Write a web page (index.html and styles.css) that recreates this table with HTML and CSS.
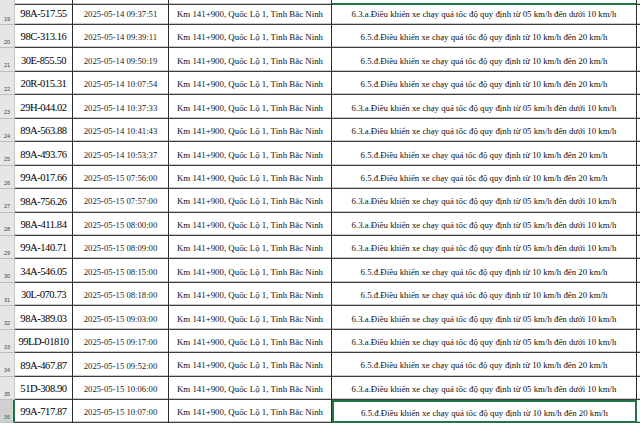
FILE: index.html
```html
<!DOCTYPE html>
<html lang="vi">
<head>
<meta charset="utf-8">
<title>Sheet</title>
<link rel="stylesheet" href="styles.css">
</head>
<body>
<div class="sheet">
  <div class="row top">
    <div class="hdr"></div><div class="c plate"></div><div class="c dt"></div><div class="c loc"></div><div class="c vio sel-top"></div><div class="c rest"></div>
  </div>
  <div class="row"><div class="hdr">19</div><div class="c plate">98A-517.55</div><div class="c dt">2025-05-14 09:37:51</div><div class="c loc">Km 141+900, Quốc Lộ 1, Tỉnh Bắc Ninh</div><div class="c vio">6.3.a.Điều khiển xe chạy quá tốc độ quy định từ 05 km/h đến dưới 10 km/h</div><div class="c rest"></div></div>
  <div class="row"><div class="hdr">20</div><div class="c plate">98C-313.16</div><div class="c dt">2025-05-14 09:39:11</div><div class="c loc">Km 141+900, Quốc Lộ 1, Tỉnh Bắc Ninh</div><div class="c vio">6.5.đ.Điều khiển xe chạy quá tốc độ quy định từ 10 km/h đến 20 km/h</div><div class="c rest"></div></div>
  <div class="row"><div class="hdr">21</div><div class="c plate">30E-855.50</div><div class="c dt">2025-05-14 09:50:19</div><div class="c loc">Km 141+900, Quốc Lộ 1, Tỉnh Bắc Ninh</div><div class="c vio">6.5.đ.Điều khiển xe chạy quá tốc độ quy định từ 10 km/h đến 20 km/h</div><div class="c rest"></div></div>
  <div class="row"><div class="hdr">22</div><div class="c plate">20R-015.31</div><div class="c dt">2025-05-14 10:07:54</div><div class="c loc">Km 141+900, Quốc Lộ 1, Tỉnh Bắc Ninh</div><div class="c vio">6.5.đ.Điều khiển xe chạy quá tốc độ quy định từ 10 km/h đến 20 km/h</div><div class="c rest"></div></div>
  <div class="row"><div class="hdr">23</div><div class="c plate">29H-044.02</div><div class="c dt">2025-05-14 10:37:33</div><div class="c loc">Km 141+900, Quốc Lộ 1, Tỉnh Bắc Ninh</div><div class="c vio">6.3.a.Điều khiển xe chạy quá tốc độ quy định từ 05 km/h đến dưới 10 km/h</div><div class="c rest"></div></div>
  <div class="row"><div class="hdr">24</div><div class="c plate">89A-563.88</div><div class="c dt">2025-05-14 10:41:43</div><div class="c loc">Km 141+900, Quốc Lộ 1, Tỉnh Bắc Ninh</div><div class="c vio">6.3.a.Điều khiển xe chạy quá tốc độ quy định từ 05 km/h đến dưới 10 km/h</div><div class="c rest"></div></div>
  <div class="row"><div class="hdr">25</div><div class="c plate">89A-493.76</div><div class="c dt">2025-05-14 10:53:37</div><div class="c loc">Km 141+900, Quốc Lộ 1, Tỉnh Bắc Ninh</div><div class="c vio">6.5.đ.Điều khiển xe chạy quá tốc độ quy định từ 10 km/h đến 20 km/h</div><div class="c rest"></div></div>
  <div class="row"><div class="hdr">26</div><div class="c plate">99A-017.66</div><div class="c dt">2025-05-15 07:56:00</div><div class="c loc">Km 141+900, Quốc Lộ 1, Tỉnh Bắc Ninh</div><div class="c vio">6.5.đ.Điều khiển xe chạy quá tốc độ quy định từ 10 km/h đến 20 km/h</div><div class="c rest"></div></div>
  <div class="row"><div class="hdr">27</div><div class="c plate">98A-756.26</div><div class="c dt">2025-05-15 07:57:00</div><div class="c loc">Km 141+900, Quốc Lộ 1, Tỉnh Bắc Ninh</div><div class="c vio">6.3.a.Điều khiển xe chạy quá tốc độ quy định từ 05 km/h đến dưới 10 km/h</div><div class="c rest"></div></div>
  <div class="row"><div class="hdr">28</div><div class="c plate">98A-411.84</div><div class="c dt">2025-05-15 08:00:00</div><div class="c loc">Km 141+900, Quốc Lộ 1, Tỉnh Bắc Ninh</div><div class="c vio">6.3.a.Điều khiển xe chạy quá tốc độ quy định từ 05 km/h đến dưới 10 km/h</div><div class="c rest"></div></div>
  <div class="row"><div class="hdr">29</div><div class="c plate">99A-140.71</div><div class="c dt">2025-05-15 08:09:00</div><div class="c loc">Km 141+900, Quốc Lộ 1, Tỉnh Bắc Ninh</div><div class="c vio">6.3.a.Điều khiển xe chạy quá tốc độ quy định từ 05 km/h đến dưới 10 km/h</div><div class="c rest"></div></div>
  <div class="row"><div class="hdr">30</div><div class="c plate">34A-546.05</div><div class="c dt">2025-05-15 08:15:00</div><div class="c loc">Km 141+900, Quốc Lộ 1, Tỉnh Bắc Ninh</div><div class="c vio">6.5.đ.Điều khiển xe chạy quá tốc độ quy định từ 10 km/h đến 20 km/h</div><div class="c rest"></div></div>
  <div class="row"><div class="hdr">31</div><div class="c plate">30L-070.73</div><div class="c dt">2025-05-15 08:18:00</div><div class="c loc">Km 141+900, Quốc Lộ 1, Tỉnh Bắc Ninh</div><div class="c vio">6.5.đ.Điều khiển xe chạy quá tốc độ quy định từ 10 km/h đến 20 km/h</div><div class="c rest"></div></div>
  <div class="row"><div class="hdr">32</div><div class="c plate">98A-389.03</div><div class="c dt">2025-05-15 09:03:00</div><div class="c loc">Km 141+900, Quốc Lộ 1, Tỉnh Bắc Ninh</div><div class="c vio">6.3.a.Điều khiển xe chạy quá tốc độ quy định từ 05 km/h đến dưới 10 km/h</div><div class="c rest"></div></div>
  <div class="row"><div class="hdr">33</div><div class="c plate">99LD-01810</div><div class="c dt">2025-05-15 09:17:00</div><div class="c loc">Km 141+900, Quốc Lộ 1, Tỉnh Bắc Ninh</div><div class="c vio">6.3.a.Điều khiển xe chạy quá tốc độ quy định từ 05 km/h đến dưới 10 km/h</div><div class="c rest"></div></div>
  <div class="row"><div class="hdr">34</div><div class="c plate">89A-467.87</div><div class="c dt">2025-05-15 09:52:00</div><div class="c loc">Km 141+900, Quốc Lộ 1, Tỉnh Bắc Ninh</div><div class="c vio">6.5.đ.Điều khiển xe chạy quá tốc độ quy định từ 10 km/h đến 20 km/h</div><div class="c rest"></div></div>
  <div class="row"><div class="hdr">35</div><div class="c plate">51D-308.90</div><div class="c dt">2025-05-15 10:06:00</div><div class="c loc">Km 141+900, Quốc Lộ 1, Tỉnh Bắc Ninh</div><div class="c vio">6.3.a.Điều khiển xe chạy quá tốc độ quy định từ 05 km/h đến dưới 10 km/h</div><div class="c rest"></div></div>
  <div class="row active"><div class="hdr">36</div><div class="c plate">99A-717.87</div><div class="c dt">2025-05-15 10:07:00</div><div class="c loc">Km 141+900, Quốc Lộ 1, Tỉnh Bắc Ninh</div><div class="c vio selected">6.5.đ.Điều khiển xe chạy quá tốc độ quy định từ 10 km/h đến 20 km/h</div><div class="c rest"></div></div>
</div>
</body>
</html>
```
FILE: styles.css
```css
html, body {
  margin: 0;
  padding: 0;
  background: #ffffff;
  overflow: hidden;
}

.sheet {
  width: 640px;
  height: 425px;
  overflow: hidden;
  font-family: "Liberation Serif", "Times New Roman", serif;
  color: #111;
}

.row {
  display: grid;
  grid-template-columns: 15px 58px 96px 163px 305px 3px;
  height: 23.45px;
  box-sizing: border-box;
}

.row.top {
  height: 1.6px;
}

.hdr {
  background: #e6e6e6;
  border-right: 1px solid #c4c4c4;
  border-bottom: 1px solid #bdbdbd;
  box-sizing: border-box;
  font-family: "Liberation Sans", Arial, sans-serif;
  font-size: 5.5px;
  color: #444;
  display: flex;
  align-items: flex-end;
  padding: 0 0 2px 4px;
  line-height: 1;
}

.c {
  box-sizing: border-box;
  border-right: 1px solid #2e2e2e;
  border-bottom: 1px solid #3c3c3c;
  box-shadow: inset 0 -1px 0 #c8c8c8;
  display: flex;
  align-items: center;
  justify-content: center;
  white-space: nowrap;
  overflow: hidden;
  padding-top: 3px;
  line-height: 1;
}

.plate {
  font-size: 10.6px;
  letter-spacing: -0.45px;
  color: #000;
}

.dt {
  font-size: 8.7px;
  color: #222;
}

.loc {
  font-size: 8.85px;
  color: #111;
}

.vio {
  font-size: 8.8px;
  color: #111;
  overflow: visible;
}

.rest {
  border-right: none;
}

.sel-top {
  border-bottom: 2px solid #217346;
  box-shadow: none;
}

.active .hdr {
  background: #d0d0d0;
  border-right: 2px solid #217346;
  color: #217346;
}

.vio.selected {
  border: 2px solid #217346;
  box-shadow: none;
}
```
